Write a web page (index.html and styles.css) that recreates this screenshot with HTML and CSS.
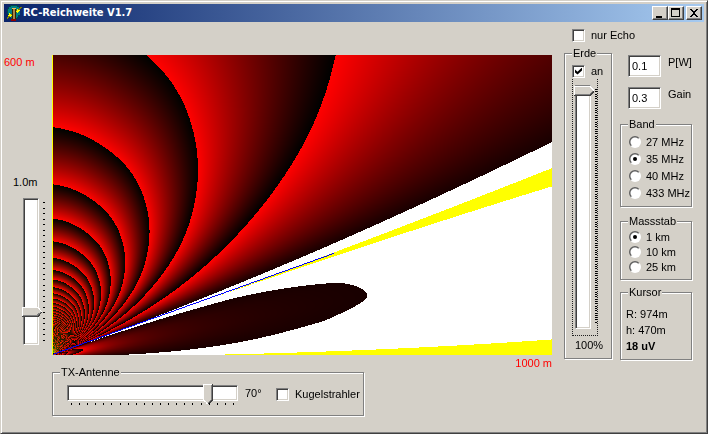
FILE: index.html
```html
<!DOCTYPE html>
<html lang="de">
<head>
<meta charset="utf-8">
<title>RC-Reichweite V1.7</title>
<link rel="stylesheet" href="styles.css">
</head>
<body>
<div class="window">
  <header class="titlebar">
    <svg class="app-icon" viewBox="0 0 16 16" shape-rendering="crispEdges" aria-hidden="true">
      <path d="M4 0h8v1h1v3h1v7h-2v3H5v-2H2V9H1V4h1V2h2z" fill="#004848"/>
      <path d="M5 1h6v1h2v2h1v6h-2v2h-1v1H5v-2H3V9H2V4h1V2h2z" fill="#008080"/>
      <path d="M1 14v-2h1v-1h2v-1h1V9h3v1H6v1H5v1H3v1H2v1zM9 6h1V5h2V4h1V3h1V2h2v1h-1v1h-1v1h-1v1h-2v1H9z" fill="#808000"/>
      <path d="M3 8h1v1h1v1h1v1H5v1H4v-1H2v-1h1zM11 4h1v1h2v1h-1v1h-1v1h-1V7h-1V6h1z" fill="#ff0"/>
      <path d="M6 4h4v10H6z" fill="#382400"/>
      <path d="M7 4h2v10H7z" fill="#a88848"/>
      <path d="M6 3h4v1H6z" fill="#e0c060"/>
      <path d="M5 14h5v2H5z" fill="#900000"/>
    </svg>
    <h1>RC-Reichweite V1.7</h1>
    <div class="window-buttons">
      <button type="button" aria-label="Minimieren"><svg viewBox="0 0 12 10" shape-rendering="crispEdges"><path d="M2 8h6v2H2z"/></svg></button>
      <button type="button" aria-label="Maximieren"><svg viewBox="0 0 12 10" shape-rendering="crispEdges"><path d="M1 0h9v9H1zM2 2v6h7V2z" fill-rule="evenodd"/></svg></button>
      <button type="button" class="close" aria-label="Schließen"><svg viewBox="0 0 12 10" shape-rendering="crispEdges"><path d="M2 1h2v1h1v1h2V2h1V1h2v1H9v1H8v1H7v2h1v1h1v1h1v1H8V8H7V7H5v1H4v1H2V8h1V7h1V6h1V4H4V3H3V2H2z"/></svg></button>
    </div>
  </header>

  <main class="client">
    <section class="diagram">
      <div class="height-axis">
        <span class="axis-label">600 m</span>
        <label class="height-value" for="height">1.0m</label>
        <div class="height-slider">
          <input class="vertical" id="height" type="range" min="0" max="5" step="0.1" value="1">
          <div class="ticks down" data-count="26"></div>
        </div>
      </div>
      <div class="field">
        <canvas id="plot" width="500" height="300"></canvas>
        <div class="under-plot">
          <fieldset class="antenna">
            <legend>TX-Antenne</legend>
            <div class="tilt">
              <input id="tilt" type="range" min="-100" max="100" value="70">
              <div class="ticks across" data-count="21"></div>
            </div>
            <label class="tilt-value" for="tilt">70°</label>
            <label class="choice"><input type="checkbox">Kugelstrahler</label>
          </fieldset>
          <span class="axis-label">1000 m</span>
        </div>
      </div>
    </section>

    <aside class="settings">
      <label class="choice echo"><input type="checkbox">nur Echo</label>
      <div class="columns">
        <fieldset class="earth">
          <legend>Erde</legend>
          <label class="choice"><input type="checkbox" checked>an</label>
          <div class="earth-slider">
            <input class="vertical" id="earth" type="range" min="0" max="100" value="100">
            <div class="ticks down" data-count="101"></div>
          </div>
          <label class="percent" for="earth">100%</label>
        </fieldset>
        <div class="values">
          <div class="entry"><input id="power" type="text" value="0.1"><label for="power">P[W]</label></div>
          <div class="entry"><input id="gain" type="text" value="0.3"><label for="gain">Gain</label></div>
          <fieldset class="band">
            <legend>Band</legend>
            <label class="choice"><input type="radio" name="band">27 MHz</label>
            <label class="choice"><input type="radio" name="band" checked>35 MHz</label>
            <label class="choice"><input type="radio" name="band">40 MHz</label>
            <label class="choice"><input type="radio" name="band">433 MHz</label>
          </fieldset>
          <fieldset class="range">
            <legend>Massstab</legend>
            <label class="choice"><input type="radio" name="range" checked>1 km</label>
            <label class="choice"><input type="radio" name="range">10 km</label>
            <label class="choice"><input type="radio" name="range">25 km</label>
          </fieldset>
          <fieldset class="cursor">
            <legend>Kursor</legend>
            <span>R: 974m</span>
            <span>h: 470m</span>
            <strong>18 uV</strong>
          </fieldset>
        </div>
      </div>
    </aside>
  </main>
</div>
<script src="plot.js"></script>
</body>
</html>
```
FILE: styles.css
```css
* { box-sizing: border-box; }

body {
  margin: 0;
  background: #d4d0c8;
  color: #000;
  font: 11px/14px "Liberation Sans", Arial, sans-serif;
}

.window {
  min-height: 100vh;
  padding: 2px;
  border: 1px solid;
  border-color: #d4d0c8 #404040 #404040 #d4d0c8;
  box-shadow: inset 1px 1px #fff, inset -1px -1px #808080;
}

.titlebar {
  display: flex;
  align-items: center;
  height: 18px;
  margin: 1px 1px 0;
  padding: 0 2px;
  background: linear-gradient(90deg, #0a246a, #a6caf0);
}
.app-icon { width: 16px; height: 16px; }
.titlebar h1 {
  flex: 1;
  margin: 0 0 0 1px;
  color: #fff;
  font: bold 11px/16px "DejaVu Sans Condensed", "DejaVu Sans", sans-serif;
}
.window-buttons { display: flex; }
.window-buttons button {
  width: 16px;
  height: 14px;
  padding: 1px;
  border: 1px solid;
  border-color: #fff #404040 #404040 #fff;
  background: #d4d0c8;
  box-shadow: inset -1px -1px #808080;
}
.window-buttons svg { display: block; width: 12px; height: 10px; }
.window-buttons .close { margin-left: 2px; }

.client {
  display: flex;
  gap: 12px;
  margin: 0 1px;
  padding-right: 12px;
}

.diagram {
  flex: 1;
  display: flex;
  padding-top: 33px;
}
.height-axis {
  display: flex;
  flex-direction: column;
  width: 48px;
}
.axis-label { color: #f00; }
.height-value { margin: 106px 0 9px 9px; }
.height-slider { display: flex; width: 44px; padding-left: 18px; }
.field { flex: 1; min-width: 0; }
canvas {
  display: block;
  width: 100%;
  aspect-ratio: 5 / 3;
  image-rendering: pixelated;
}
.under-plot { display: flex; justify-content: space-between; align-items: flex-start; }
.under-plot .axis-label { margin-top: 1px; }

fieldset {
  min-width: 0;
  margin: 0;
  padding: 0;
  border: 1px solid #808080;
  box-shadow: 1px 1px #fff, inset 1px 1px #fff;
}
legend {
  height: 14px;
  margin-left: 7px;
  padding: 0 1px;
  background: #d4d0c8;
}

.antenna {
  display: flex;
  width: 312px;
  height: 51px;
  margin-top: 10px;
}
.tilt { width: 171px; margin-left: 14px; padding-top: 4px; }
.tilt-value { width: 38px; padding: 7px 0 0 7px; }
.antenna .choice { align-self: flex-start; margin-top: 8px; }

.choice { display: flex; align-items: center; gap: 6px; white-space: nowrap; }

input { margin: 0; appearance: none; font: inherit; }

[type="checkbox"], [type="text"] {
  border: 1px solid;
  border-color: #808080 #fff #fff #808080;
  background: #fff;
  box-shadow: inset 1px 1px #404040, inset -1px -1px #d4d0c8;
}
[type="checkbox"] { width: 13px; height: 13px; }
[type="checkbox"]:checked::before {
  content: "";
  display: block;
  width: 7px;
  height: 7px;
  margin: 2px;
  background: #000;
  clip-path: polygon(0 28%, 36% 62%, 100% 0, 100% 42%, 36% 100%, 0 70%);
}
[type="radio"] {
  width: 12px;
  height: 12px;
  padding: 2px;
  border-radius: 50%;
  background: radial-gradient(circle, #fff 4px, transparent 5px), linear-gradient(135deg, #606060 45%, #fff 55%);
}
[type="radio"]:checked::before {
  content: "";
  display: block;
  width: 4px;
  height: 4px;
  margin: 2px;
  border-radius: 50%;
  background: #000;
}

[type="range"] {
  display: block;
  width: 100%;
  height: 20px;
  background: none;
}
[type="range"]::-webkit-slider-runnable-track {
  height: 16px;
  border: 1px solid;
  border-color: #808080 #fff #fff #808080;
  background: #fff;
  box-shadow: inset 1px 1px #404040, inset -1px -1px #d4d0c8;
}
[type="range"]::-webkit-slider-thumb {
  appearance: none;
  width: 10px;
  height: 20px;
  margin-top: -2px;
  background:
    linear-gradient(#fff, #fff) 0 0 / 9px 1px no-repeat,
    linear-gradient(90deg, #fff 1px, #d4d0c8 1px 8px, #808080 8px 9px, #404040 9px) 0 0 / 10px 15px no-repeat,
    linear-gradient(45deg, transparent 40%, #fff 40% 58%, #d4d0c8 58%) 0 15px / 5px 5px no-repeat,
    linear-gradient(-45deg, transparent 40%, #404040 40% 58%, #808080 58% 70%, #d4d0c8 70%) 5px 15px / 5px 5px no-repeat;
}
.vertical {
  flex: none;
  width: 20px;
  height: 147px;
  writing-mode: vertical-lr;
  direction: rtl;
}
.vertical::-webkit-slider-runnable-track { width: 16px; height: 100%; margin: 0 auto 0 1px; }
.vertical::-webkit-slider-thumb {
  width: 20px;
  height: 10px;
  margin: 0 0 0 -2px;
  background:
    linear-gradient(#fff, #fff) 0 0 / 1px 9px no-repeat,
    linear-gradient(#fff 1px, #d4d0c8 1px 8px, #808080 8px 9px, #404040 9px) 0 0 / 15px 10px no-repeat,
    linear-gradient(-135deg, transparent 40%, #fff 40% 58%, #d4d0c8 58%) 15px 0 / 5px 5px no-repeat,
    linear-gradient(-45deg, transparent 40%, #404040 40% 58%, #808080 58% 70%, #d4d0c8 70%) 15px 5px / 5px 5px no-repeat;
}

.ticks { display: flex; justify-content: space-between; }
.ticks i { flex: none; background: #000; }
.ticks.across { padding: 0 4px; }
.ticks.across i { width: 1px; height: 2px; }
.ticks.down { flex-direction: column; margin-left: 1px; padding: 4px 0; }
.ticks.down i { width: 2px; height: 1px; }

.settings { width: 128px; padding-top: 6px; }
.echo { margin-left: 8px; }
.columns { display: flex; gap: 8px; margin-top: 4px; }
.earth { width: 48px; height: 313px; }
.earth > .choice { margin: 4px 0 0 7px; }
.earth-slider {
  display: flex;
  width: 26px;
  height: 257px;
  margin: 1px 0 0 7px;
  padding: 6px 0 7px 1px;
  border: 1px dotted #202020;
  border-top: 0;
}
.earth-slider .vertical { height: 244px; }
.percent { display: block; margin: 2px 0 0 10px; }

.values { width: 72px; padding-top: 9px; }
.entry { display: flex; gap: 7px; height: 22px; margin-bottom: 10px; padding-left: 8px; }
.entry + .entry { margin-bottom: 8px; }
.entry input { width: 33px; height: 22px; padding: 0 3px; }
.values fieldset { display: flex; flex-direction: column; }
.values .choice { padding-left: 8px; gap: 5px; }
.band { height: 90px; }
.band .choice { height: 17px; }
.band legend + .choice { margin-top: 2px; }
.range { height: 66px; margin-top: 7px; }
.range .choice { height: 15px; }
.range legend + .choice { margin-top: 1px; }
.values .cursor { height: 75px; margin-top: 5px; line-height: 16px; }
.cursor > span, .cursor strong { margin-left: 5px; }
.cursor legend + span { margin-top: 7px; }
.cursor legend { line-height: 14px; }
```
FILE: plot.js
```js
// Ticks beside the sliders
document.querySelectorAll(".ticks").forEach(function (box) {
  for (let n = 0; n < Number(box.dataset.count); n++) {
    box.appendChild(document.createElement("i"));
  }
});

// Antenna pattern: [elevation in degrees, relative field strength]
const pattern = [
  [0, 0], [2, 10], [3.9, 17.1], [6.4, 24], [7.7, 27.3], [10.95, 31.3],
  [13.8, 29.5], [15.2, 26.4], [17.6, 18.1], [18.6, 11], [19.4, 5.8],
  [19.75, 3.4], [20.1, 5.8], [20.55, 10.3], [20.9, 15.5], [21.5, 25.7],
  [22.4, 40.2], [23.2, 54], [27, 121], [35.9, 264], [41.1, 342], [46.8, 414],
  [53, 483], [60.5, 552], [66.5, 596], [72.6, 629], [81.8, 666], [90, 685]
];

function slope(i) {
  const a = pattern[Math.max(i - 1, 0)];
  const b = pattern[Math.min(i + 1, pattern.length - 1)];
  if (pattern[i][0] === 10.95) return 0;
  if (i === pattern.length - 1) return 1.5;
  return (b[1] - a[1]) / (b[0] - a[0]);
}

function strength(angle) {
  let i = 0;
  while (i < pattern.length - 2 && angle > pattern[i + 1][0]) i++;
  const p = pattern[i], q = pattern[i + 1];
  const w = q[0] - p[0], t = (angle - p[0]) / w;
  if (p[0] > 17 && p[0] < 20.6) return p[1] + (q[1] - p[1]) * t;
  const t2 = t * t, t3 = t2 * t;
  return (2 * t3 - 3 * t2 + 1) * p[1] + (t3 - 2 * t2 + t) * w * slope(i)
    + (3 * t2 - 2 * t3) * q[1] + (t3 - t2) * w * slope(i + 1);
}

const canvas = document.getElementById("plot");
const ctx = canvas.getContext("2d");
const width = canvas.width, height = canvas.height;
const image = ctx.createImageData(width, height);

function setPixel(x, y, r, g, b) {
  const at = (y * width + x) * 4;
  image.data[at] = r;
  image.data[at + 1] = g;
  image.data[at + 2] = b;
  image.data[at + 3] = 255;
}

for (let y = 0; y < height; y++) {
  for (let x = 0; x < width; x++) {
    // The source lies just below the first row for flat rays
    const row = height - y;
    const flat = Math.max(0, 1 - Math.atan2(row, x) * 180 / Math.PI / 16);
    const up = row + flat;
    const angle = Math.atan2(up, x) * 180 / Math.PI;
    const level = Math.floor(256 * strength(angle) / Math.hypot(x, up));
    if (x === 0 || level < 5) setPixel(x, y, 255, 255, 0);
    else if (level < 25) setPixel(x, y, 255, 255, 255);
    else setPixel(x, y, level % 256, Math.floor(level / 256) % 256, 0);
  }
}

// Antenna axis
for (let x = 1; x <= 281; x++) {
  setPixel(x, height - 1 - Math.round(x * 101 / 281), 0, 0, 255);
}
ctx.putImageData(image, 0, 0);
```
